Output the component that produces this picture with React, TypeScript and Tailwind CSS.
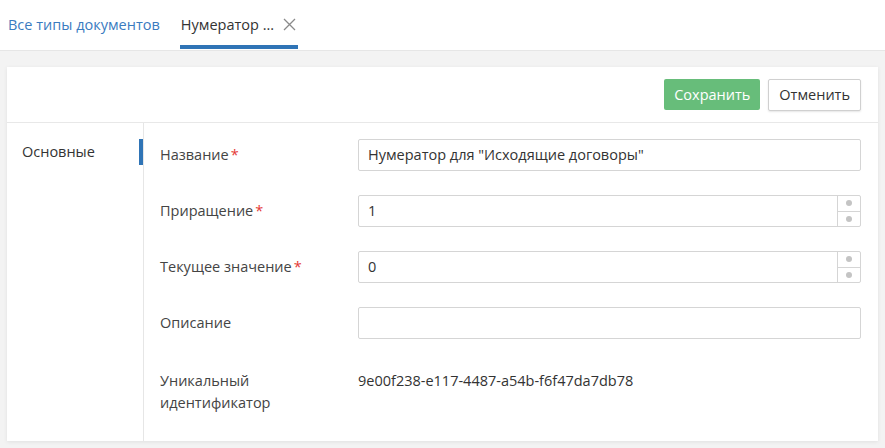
import React from "react";

const font = { fontFamily: '"Open Sans", "Noto Sans", sans-serif' };

function Label({ text, required }: { text: string; required?: boolean }) {
  return (
    <div className="w-[198px] shrink-0 text-[14.5px] text-[#444]">
      {text}
      {required && <span className="text-[#e53935] ml-[2px]">*</span>}
    </div>
  );
}

function Spinner() {
  return (
    <div className="w-[23px] h-full border-l border-[#d5d5d5] flex flex-col">
      <div className="flex-1 flex items-center justify-center border-b border-[#d5d5d5]">
        <span className="w-[6px] h-[6px] rounded-full bg-[#c4c4c4]" />
      </div>
      <div className="flex-1 flex items-center justify-center">
        <span className="w-[6px] h-[6px] rounded-full bg-[#c4c4c4]" />
      </div>
    </div>
  );
}

function Input({ value, spinner }: { value?: string; spinner?: boolean }) {
  return (
    <div className="flex-1 h-[32px] border border-[#d5d5d5] rounded-[2px] flex items-stretch bg-white">
      <div className="flex-1 flex items-center pl-[9px] text-[14.5px] text-[#333]">{value}</div>
      {spinner && <Spinner />}
    </div>
  );
}

export default function App() {
  return (
    <div className="w-[885px] h-[448px] flex flex-col bg-white overflow-hidden" style={font}>
      <div className="h-[51px] shrink-0 border-b border-[#e6e6e6] flex items-stretch pl-[8px] bg-white">
        <div className="flex items-center text-[14.5px] text-[#3a7bbf] pr-[20px]">Все типы документов</div>
        <div className="relative flex items-center gap-[9px] pl-[1px] pr-[2px] text-[14.5px] text-[#333]">
          <span>Нумератор ...</span>
          <svg width="13" height="13" viewBox="0 0 13 13" className="mb-[2px]">
            <path d="M1 1 L12 12 M12 1 L1 12" stroke="#8a8a8a" strokeWidth="1.3" fill="none" />
          </svg>
          <div className="absolute left-0 right-0 bottom-[1px] h-[4px] bg-[#2f74b6]" />
        </div>
      </div>
      <div className="flex-1 bg-[#f3f3f3] pt-[16px] px-[7px] pb-[7px] flex">
        <div className="flex-1 bg-white shadow-[0_1px_4px_rgba(0,0,0,0.08)] flex flex-col">
          <div className="h-[56px] shrink-0 border-b border-[#e8e8e8] flex items-center justify-end gap-[8px] pr-[17px]">
            <button className="h-[31px] px-[10px] rounded-[2px] bg-[#67bd7a] text-white text-[14.5px]">Сохранить</button>
            <button className="h-[32px] px-[10px] rounded-[2px] bg-white border border-[#d0d0d0] text-[#333] text-[14.5px] shadow-[0_1px_2px_rgba(0,0,0,0.1)]">
              Отменить
            </button>
          </div>
          <div className="flex-1 flex">
            <div className="w-[137px] shrink-0 border-r border-[#e6e6e6] pt-[16px]">
              <div className="h-[26px] flex items-center pl-[15px] text-[14.5px] text-[#333] relative">
                Основные
                <div className="absolute right-0 top-0 bottom-0 w-[4px] bg-[#2f74b6]" />
              </div>
            </div>
            <div className="flex-1 pl-[16px] pr-[17px] pt-[16px] flex flex-col gap-[24px]">
              <div className="flex items-center">
                <Label text="Название" required />
                <Input value={'Нумератор для "Исходящие договоры"'} />
              </div>
              <div className="flex items-center">
                <Label text="Приращение" required />
                <Input value="1" spinner />
              </div>
              <div className="flex items-center">
                <Label text="Текущее значение" required />
                <Input value="0" spinner />
              </div>
              <div className="flex items-center">
                <Label text="Описание" />
                <Input value="" />
              </div>
              <div className="flex items-start pt-[7px] leading-[22px]">
                <div className="w-[198px] shrink-0 text-[14.5px] text-[#444]">
                  Уникальный
                  <br />
                  идентификатор
                </div>
                <div className="text-[14.5px] text-[#333]">9e00f238-e117-4487-a54b-f6f47da7db78</div>
              </div>
            </div>
          </div>
        </div>
      </div>
    </div>
  );
}
